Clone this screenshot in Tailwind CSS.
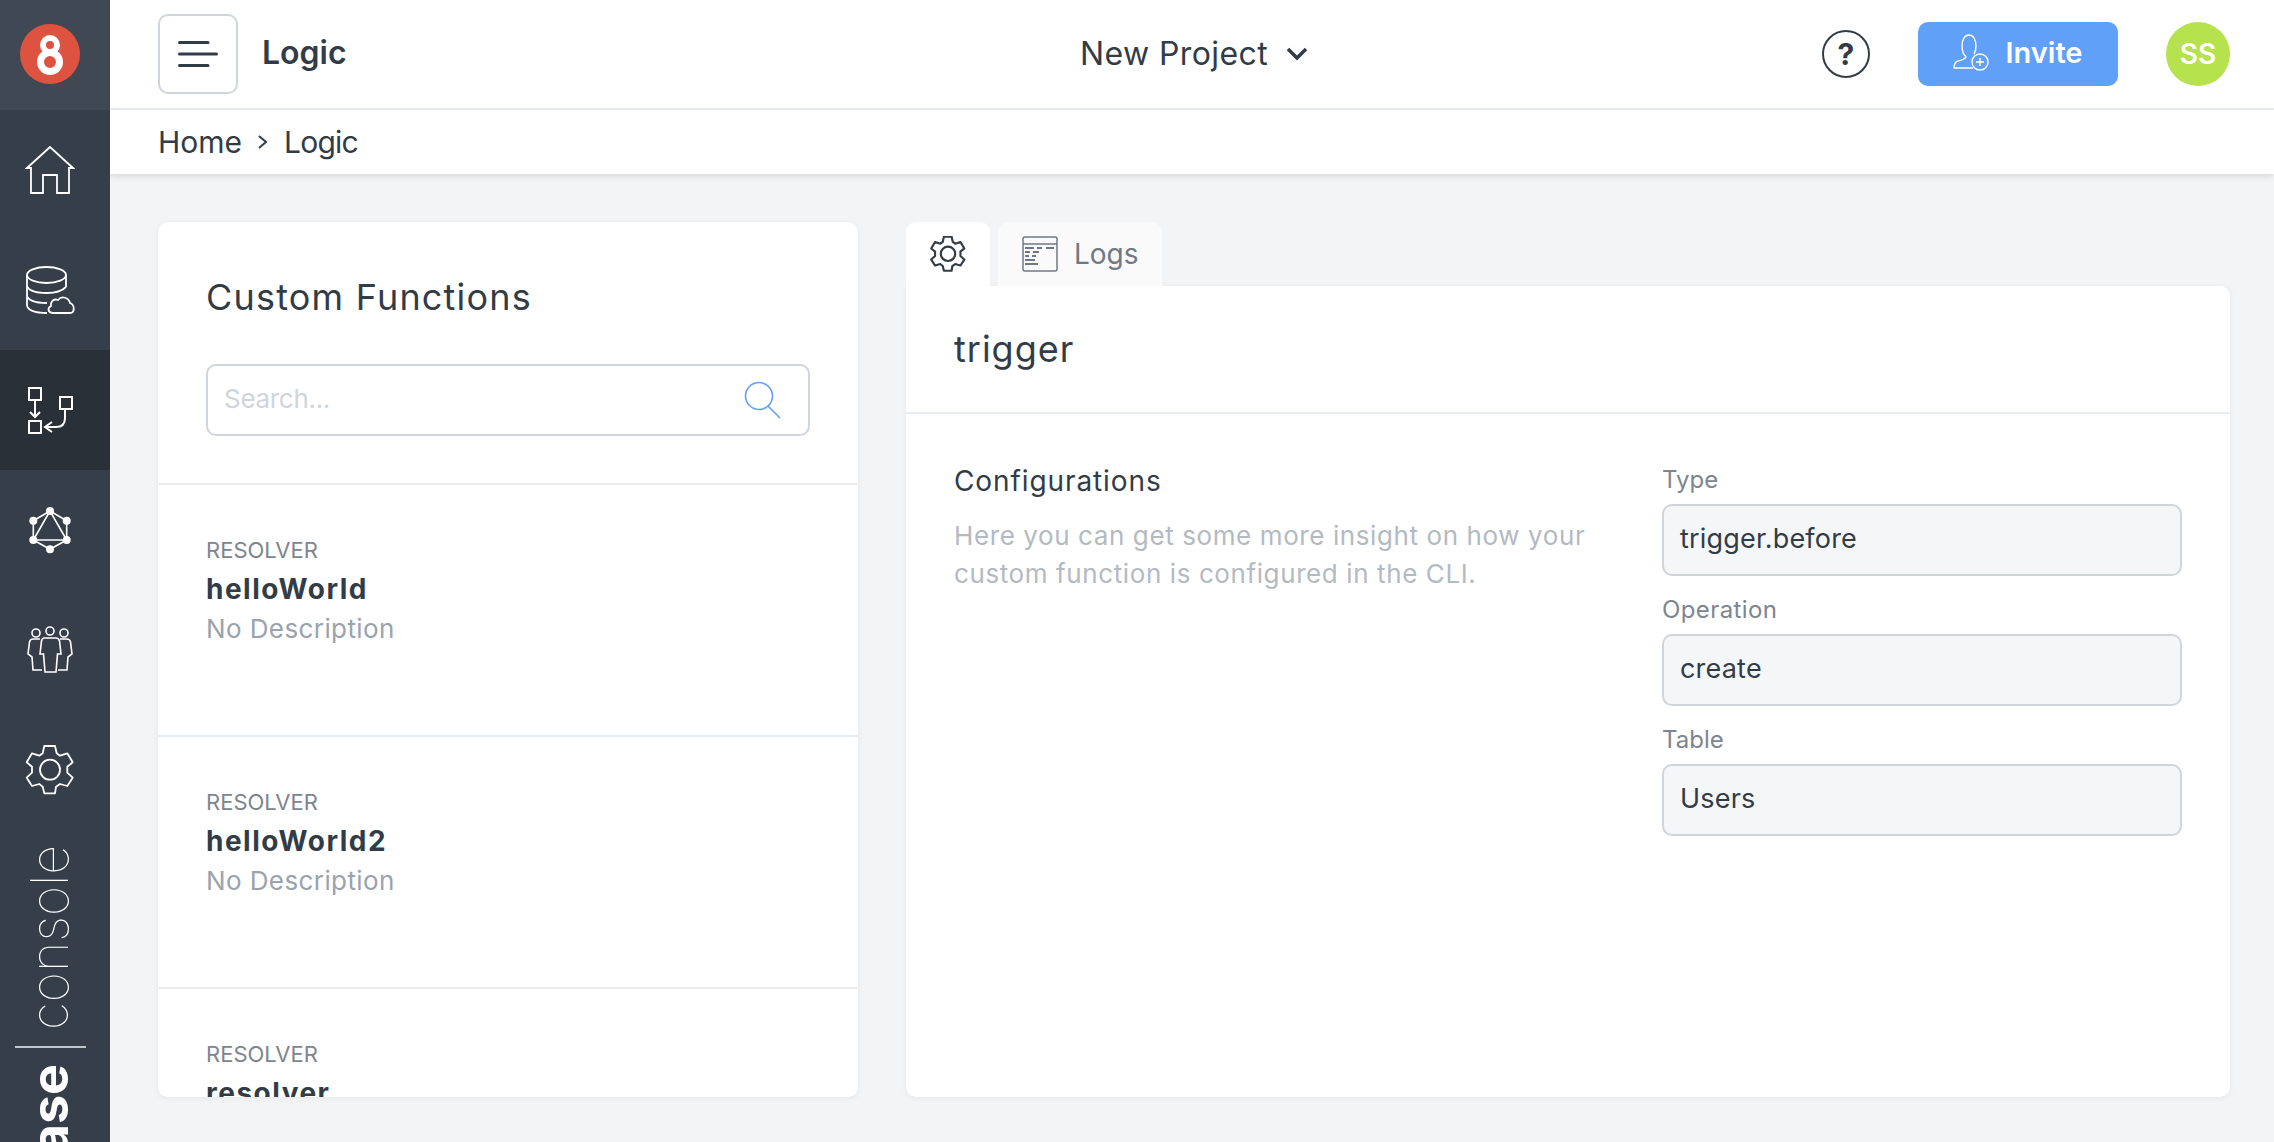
<!DOCTYPE html>
<html lang="en">
<head>
  <meta charset="UTF-8" />
  <title>Logic | 8base console</title>
  <script src="https://cdn.jsdelivr.net/npm/@tailwindcss/browser@4"></script>
</head>
<body class="h-[1142px] overflow-hidden bg-[#f3f4f6] text-[#323c47] font-['Inter','Liberation_Sans',sans-serif]">
  <div class="flex h-[1142px]">
    <!-- sidebar -->
    <aside class="relative z-10 w-[110px] shrink-0 overflow-hidden bg-[#353e49] text-white">
      <div class="flex h-[110px] items-center justify-center bg-[#3f4853] pb-[2px] pr-[10px]">
        <div class="flex h-[60px] w-[60px] items-center justify-center rounded-full bg-[#dd5340]">
          <svg width="28" height="44" viewBox="0 0 28 44" fill="none" stroke="#fff"><circle cx="14" cy="13" r="7" stroke-width="6"/><circle cx="14" cy="30" r="9.500" stroke-width="7"/></svg>
        </div>
      </div>
      <nav class="flex flex-col">
        <a class="flex h-[120px] items-center justify-center pr-[10px]">
          <svg width="50" height="50" viewBox="0 0 50 50" fill="none" stroke="#fff" stroke-width="1.8"><path d="M2 23 25 2 48 23H44V48H32V30H18V48H6V23Z"/></svg>
        </a>
        <a class="flex h-[120px] items-center justify-center pr-[10px]">
          <svg width="50" height="50" viewBox="0 0 50 50" fill="none" stroke="#fff" stroke-width="1.8"><ellipse cx="21.500" cy="10" rx="19.500" ry="8"/><path d="M2 10V40C2 45 10 48 22 48M41 10V22M2 20C2 25 10 28 22 28 30 28 37 26 41 22M2 30C2 35 10 38 22 38"/><path d="M28 48H45C50 48 50 40 45 38 44 33 37 30 33 35 28 33 25 38 26 41 22 43 23 48 28 48Z" fill="#353e49"/></svg>
        </a>
        <a class="flex h-[120px] items-center justify-center bg-[#2a3038] pr-[10px]">
          <svg width="50" height="50" viewBox="0 0 50 50" fill="none" stroke="#fff" stroke-width="2"><rect x="4" y="3" width="12" height="12"/><rect x="35" y="12" width="12" height="12"/><rect x="4" y="36" width="12" height="12"/><path d="M10 15V32M5 27l5 5 5-5M40 24V33C40 39 37 42 31 42H20M27 37l-7 5 7 5"/></svg>
        </a>
        <a class="flex h-[120px] items-center justify-center pr-[10px]">
          <svg width="50" height="50" viewBox="0 0 50 50" fill="none" stroke="#fff" stroke-width="1.6"><path d="M25 6 41.700 15.700V35L25 44.300 8.300 35V15.700ZM25 6 8.300 35H41.700Z"/><g fill="#fff" stroke="none"><circle cx="25" cy="6" r="4"/><circle cx="41.700" cy="15.700" r="4"/><circle cx="41.700" cy="35" r="4"/><circle cx="25" cy="44.300" r="4"/><circle cx="8.300" cy="35" r="4"/><circle cx="8.300" cy="15.700" r="4"/></g></svg>
        </a>
        <a class="flex h-[120px] items-center justify-center pr-[10px]">
          <svg width="50" height="50" viewBox="0 0 50 50" fill="none" stroke="#fff" stroke-width="1.6"><circle cx="25" cy="6" r="4"/><circle cx="11" cy="8" r="4"/><circle cx="39" cy="8" r="4"/><path d="M19 13H31C33 13 34 14 34.500 16L36 29H32.500L31 47H20L18.500 29H15L16.500 16C17 14 18 13 19 13Z"/><path d="M15 14H8C6 14 5 15 4.500 17L3 29 7 32 8 45H17M35 14H42C44 14 45 15 45.500 17L47 29 43 32 42 45H33"/></svg>
        </a>
        <a class="flex h-[120px] items-center justify-center pr-[10px]">
          <svg width="50" height="50" viewBox="0 0 50 50" fill="none" stroke="#fff" stroke-width="1.8" stroke-linejoin="round"><circle cx="25" cy="24.700" r="10"/><path d="M19.300 1H30L31.700 8.300 35 10.700 42.300 8.300 47.700 17.300 42.300 21.700V27.700L47.700 32.700 42.300 41 35 39 31 41.700 30 48.300H19.300L17.700 41.700 14.300 39 7 41 1.700 32.700 7 27.700V21.700L1.700 17.300 7 8.300 14.300 10.700 17.700 8.300Z"/></svg>
        </a>
      </nav>
      <!-- wordmark runs up the side and gets cut off by the window -->
      <div class="flex flex-col items-center pr-[10px] pt-[15px]">
        <span class="rotate-180 text-[52px] leading-[56px] font-thin [writing-mode:vertical-rl]">console</span>
        <div class="my-[16px] h-[2px] w-[71px] shrink-0 bg-white/70"></div>
        <span class="rotate-180 text-[52px] leading-[56px] font-bold [writing-mode:vertical-rl]">8base</span>
      </div>
    </aside>

    <div class="flex min-w-0 flex-1 flex-col">
      <!-- top bar -->
      <header class="flex h-[110px] items-center border-b-2 border-[#e9eef2] bg-white pl-[48px] pr-[44px]">
        <button class="flex h-[80px] w-[80px] items-center justify-center rounded-[10px] border-2 border-[#d0d5dc]">
          <svg width="40" height="26" viewBox="0 0 40 26" stroke="#323c47" stroke-width="3" stroke-linecap="round"><path d="M1.500 1.500H30M1.500 13H38.500M1.500 24.500H30"/></svg>
        </button>
        <span class="ml-[24px] w-[300px] pb-[2px] text-[32px] font-semibold">Logic</span>
        <div class="ml-[518px] flex items-center gap-[18px] text-[32px] tracking-[0.4px]">
          <span>New Project</span>
          <svg width="22" height="14" viewBox="0 0 22 14" fill="none" stroke="#323c47" stroke-width="3.500"><path d="M2 2l9 9 9-9"/></svg>
        </div>
        <div class="ml-auto flex h-[48px] w-[48px] items-center justify-center rounded-full border-2 border-[#323c47] text-[30px] font-bold">?</div>
        <button class="ml-[48px] flex h-[64px] w-[200px] items-center justify-center gap-[16px] rounded-[10px] bg-[#60a0f8] pb-[2px] text-[29px] font-semibold text-white">
          <svg width="36" height="38" viewBox="0 0 36 38" fill="none" stroke="#fff" stroke-width="1.4"><path d="M20 34H1c0-4 1-6 4-7 5-1 7-2 8-4-3-3-4-7-4-11C9 5 12 1 16 1s7 4 7 11c0 3 0 5-2 8"/><circle cx="27" cy="28" r="8"/><path d="M27 24v8M23 28h8"/></svg>
          <span>Invite</span>
        </button>
        <div class="ml-[48px] flex h-[64px] w-[64px] items-center justify-center rounded-full bg-[#b5e24d] text-[28px] font-semibold text-white">SS</div>
      </header>

      <!-- breadcrumb -->
      <div class="flex h-[64px] items-center gap-[15px] bg-white pl-[48px] text-[30px] shadow-[0_2px_6px_rgba(0,0,0,0.12)]">
        <span>Home</span>
        <svg width="12" height="16" viewBox="0 0 12 16" fill="none" stroke="#323c47" stroke-width="2"><path d="M2 2l7 6-7 6"/></svg>
        <span class="tracking-[-0.8px]">Logic</span>
      </div>

      <main class="flex gap-[48px] pl-[48px] pr-[44px] pt-[48px]">
        <!-- function list -->
        <section class="h-[875px] w-[700px] shrink-0 overflow-hidden rounded-[10px] bg-white shadow-[0_1px_6px_rgba(0,0,0,0.06)]">
          <div class="h-[263px] border-b-2 border-[#e9eef2] px-[48px] pt-[50px]">
            <h2 class="text-[36px] leading-[50px] tracking-[1.2px]">Custom Functions</h2>
            <div class="mt-[42px] flex h-[72px] items-center justify-between rounded-[10px] border-2 border-[#d0d5dc] pl-[16px] pr-[26px] text-[26px] tracking-[-0.3px] text-[#d0d5dc]">
              <span class="pb-[3px]">Search...</span>
              <svg width="38" height="38" viewBox="0 0 38 38" fill="none" stroke="#60a0f8" stroke-width="1.6"><circle cx="15" cy="15" r="13.500"/><path d="M24 25l12 12"/></svg>
            </div>
          </div>
          <div class="h-[252px] border-b-2 border-[#e9eef2] px-[48px] pt-[50px]">
            <div class="text-[22px] leading-[30px] text-[#7d8590]">RESOLVER</div>
            <div class="mt-[6px] text-[28px] leading-[36px] font-bold tracking-[1.5px]">helloWorld</div>
            <div class="mt-[4px] text-[26px] leading-[36px] tracking-[0.4px] text-[#9aa3ad]">No Description</div>
          </div>
          <div class="h-[252px] border-b-2 border-[#e9eef2] px-[48px] pt-[50px]">
            <div class="text-[22px] leading-[30px] text-[#7d8590]">RESOLVER</div>
            <div class="mt-[6px] text-[28px] leading-[36px] font-bold tracking-[1.5px]">helloWorld2</div>
            <div class="mt-[4px] text-[26px] leading-[36px] tracking-[0.4px] text-[#9aa3ad]">No Description</div>
          </div>
          <div class="h-[252px] px-[48px] pt-[50px]">
            <div class="text-[22px] leading-[30px] text-[#7d8590]">RESOLVER</div>
            <div class="mt-[6px] text-[28px] leading-[36px] font-bold tracking-[1.5px]">resolver</div>
          </div>
        </section>

        <!-- details -->
        <section class="min-w-0 flex-1">
          <div class="flex h-[64px] gap-[8px]">
            <div class="flex w-[84px] items-center justify-center rounded-t-[10px] bg-white">
              <svg width="36" height="36" viewBox="0 0 50 50" fill="none" stroke="#323c47" stroke-width="3" stroke-linejoin="round"><circle cx="25" cy="24.700" r="10"/><path d="M19.300 1H30L31.700 8.300 35 10.700 42.300 8.300 47.700 17.300 42.300 21.700V27.700L47.700 32.700 42.300 41 35 39 31 41.700 30 48.300H19.300L17.700 41.700 14.300 39 7 41 1.700 32.700 7 27.700V21.700L1.700 17.300 7 8.300 14.300 10.700 17.700 8.300Z"/></svg>
            </div>
            <div class="flex w-[164px] items-center gap-[16px] rounded-t-[10px] bg-[#fafafb] pl-[24px] text-[28px] text-[#6f7985]">
              <svg width="36" height="36" viewBox="0 0 36 36" fill="none" stroke="#6f7985" stroke-width="1.500"><rect x="1" y="1" width="34" height="34" rx="2"/><path d="M1 8H35"/><path stroke-width="2" d="M3 12H12M15 12H20M24 12H32M3 16H8M11 16H17M3 20H7M10 20H14M3 24H13M3 28H16"/></svg>
              <span>Logs</span>
            </div>
          </div>
          <div class="h-[811px] rounded-b-[10px] rounded-tr-[10px] bg-white shadow-[0_1px_6px_rgba(0,0,0,0.06)]">
            <div class="flex h-[128px] items-center border-b-2 border-[#e9eef2] pl-[48px] text-[36px] tracking-[1px]">trigger</div>
            <div class="flex pl-[48px] pr-[48px] pt-[47px]">
              <div class="w-[708px] shrink-0">
                <h3 class="text-[28px] leading-[40px] tracking-[0.9px]">Configurations</h3>
                <p class="mt-[16px] text-[26px] leading-[38px] tracking-[0.6px] text-[#b4bac1]">Here you can get some more insight on how your<br />custom function is configured in the CLI.</p>
              </div>
              <div class="min-w-0 flex-1 pt-[3px]">
                <label class="block text-[24px] leading-[32px] text-[#7d8590]">Type</label>
                <div class="mt-[8px] flex h-[72px] items-center rounded-[10px] border-2 border-[#d0d5dc] bg-[#f5f6f8] pb-[2px] pl-[16px] text-[27px] tracking-[0.2px]">trigger.before</div>
                <label class="mb-[4px] mt-[14px] block text-[24px] leading-[40px] tracking-[0.4px] text-[#7d8590]">Operation</label>
                <div class="flex h-[72px] items-center rounded-[10px] border-2 border-[#d0d5dc] bg-[#f5f6f8] pb-[2px] pl-[16px] text-[27px] tracking-[0.2px]">create</div>
                <label class="mb-[4px] mt-[14px] block text-[24px] leading-[40px] text-[#7d8590]">Table</label>
                <div class="flex h-[72px] items-center rounded-[10px] border-2 border-[#d0d5dc] bg-[#f5f6f8] pb-[2px] pl-[16px] text-[27px] tracking-[0.2px]">Users</div>
              </div>
            </div>
          </div>
        </section>
      </main>
    </div>
  </div>
</body>
</html>
